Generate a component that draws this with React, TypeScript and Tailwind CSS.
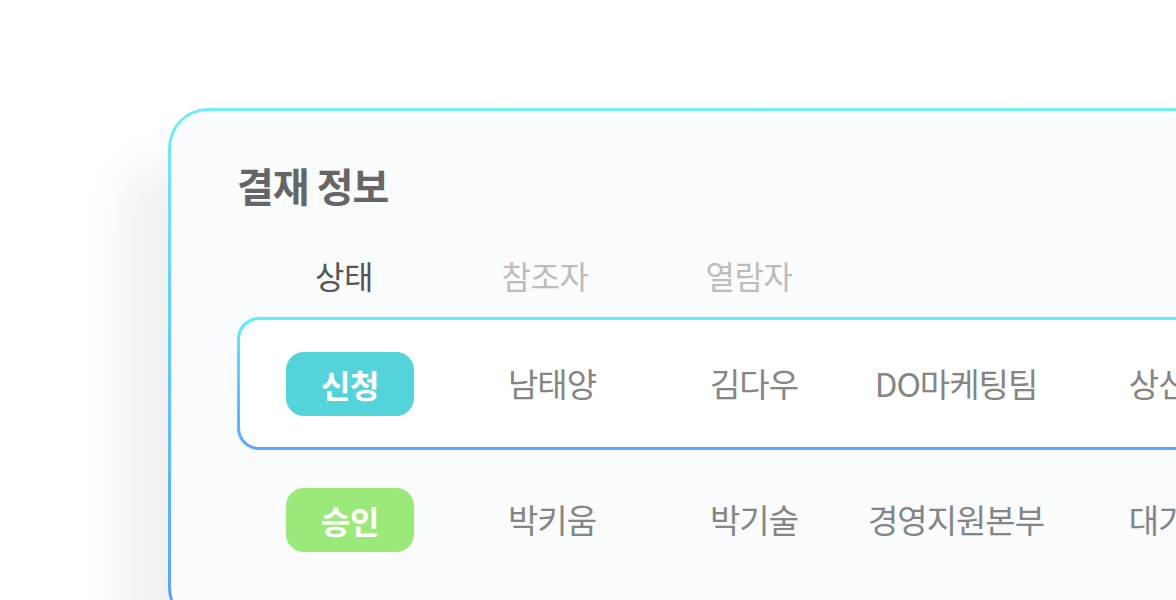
import React from 'react';

const font = { fontFamily: '"Noto Sans CJK KR", "Noto Sans", sans-serif' };

type Row = { status: string; tone: 'apply' | 'ok'; cells: string[] };

const rows: Row[] = [
  { status: '신청', tone: 'apply', cells: ['남태양', '김다우', 'DO마케팅팀', '상신'] },
  { status: '승인', tone: 'ok', cells: ['박키움', '박기술', '경영지원본부', '대기'] },
];

const RowContent: React.FC<{ row: Row }> = ({ row }) => (
  <div className="flex items-center h-full pl-[9px]">
    <div className="w-[202px] shrink-0 flex justify-center">
      <span
        className={`w-[128px] h-[64px] rounded-[18px] flex items-center justify-center text-white text-[32px] font-bold tracking-[-0.5px] ${
          row.tone === 'apply' ? 'bg-[#55d3da]' : 'bg-[#9ce97b]'
        }`}
      >
        {row.status}
      </span>
    </div>
    {row.cells.map((c, i) => (
      <div key={i} className="w-[202px] shrink-0 text-center text-[33px] text-[#858585] whitespace-nowrap tracking-[-1px]">
        {c}
      </div>
    ))}
  </div>
);

export default function App() {
  return (
    <div className="w-[1176px] h-[600px] bg-white overflow-hidden" style={font}>
      <div className="pt-[108px] pl-[168px]">
        <div className="w-[1200px] h-[520px] rounded-[40px] p-[3px] bg-gradient-to-b from-[#74ecf6] to-[#589fff] shadow-[-45px_55px_45px_rgba(0,0,0,0.06)]">
          <div className="h-full rounded-[37px] bg-[#f9fbfd] pt-[51px] pl-[66px]">
            <h2 className="h-[46px] leading-[46px] text-[40px] font-bold text-[#666666] tracking-[-1px]">결재 정보</h2>

            <div className="mt-[44px] h-[46px] flex items-center pl-[9px]">
              <div className="w-[196px] text-center text-[32px] text-[#555555] tracking-[-0.5px]">상태</div>
              <div className="w-[206px] text-center text-[32px] text-[#bcbcbc] tracking-[-0.5px]">참조자</div>
              <div className="w-[202px] text-center text-[32px] text-[#bcbcbc] tracking-[-0.5px]">열람자</div>
            </div>

            <div className="mt-[19px] h-[133px] rounded-[22px] p-[3px] bg-gradient-to-b from-[#54f1fb] to-[#5aa5ff]">
              <div className="h-full rounded-[19px] bg-white">
                <RowContent row={rows[0]} />
              </div>
            </div>

            <div className="mt-[38px] h-[64px] px-[3px]">
              <RowContent row={rows[1]} />
            </div>
          </div>
        </div>
      </div>
    </div>
  );
}
